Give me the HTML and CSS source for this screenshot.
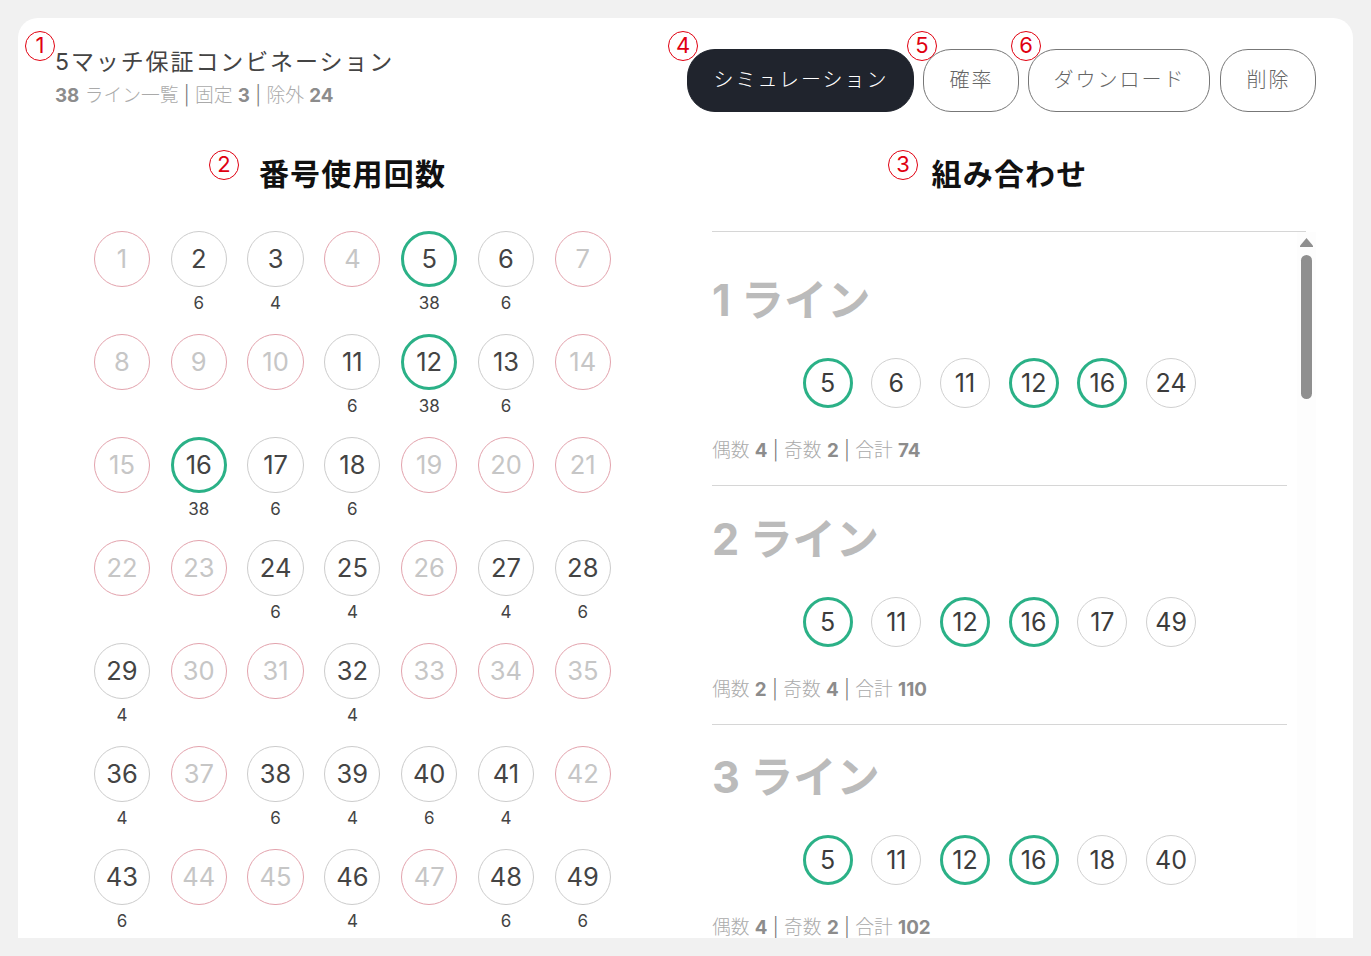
FILE: index.html
```html
<!DOCTYPE html>
<html lang="ja">
<head>
<meta charset="utf-8">
<title>5マッチ保証コンビネーション</title>
<link rel="stylesheet" href="styles.css">
</head>
<body>
<main class="card">
  <header class="top">
    <div class="heading">
      <h1 class="title">5マッチ保証コンビネーション</h1>
      <p class="sub"><b>38</b> ライン一覧 <i>|</i> 固定 <b>3</b> <i>|</i> 除外 <b>24</b></p>
    </div>
    <div class="actions">
      <button class="btn btn-dark">シミュレーション</button>
      <button class="btn btn-one">確率</button>
      <button class="btn btn-dl">ダウンロード</button>
      <button class="btn btn-one">削除</button>
    </div>
  </header>
  <div class="columns">
    <section class="left">
      <h2 class="section-title">番号使用回数</h2>
      <div class="grid">
        <div class="cell"><span class="ball off">1</span></div>
        <div class="cell"><span class="ball">2</span><span class="count">6</span></div>
        <div class="cell"><span class="ball">3</span><span class="count">4</span></div>
        <div class="cell"><span class="ball off">4</span></div>
        <div class="cell"><span class="ball fix">5</span><span class="count">38</span></div>
        <div class="cell"><span class="ball">6</span><span class="count">6</span></div>
        <div class="cell"><span class="ball off">7</span></div>
        <div class="cell"><span class="ball off">8</span></div>
        <div class="cell"><span class="ball off">9</span></div>
        <div class="cell"><span class="ball off">10</span></div>
        <div class="cell"><span class="ball">11</span><span class="count">6</span></div>
        <div class="cell"><span class="ball fix">12</span><span class="count">38</span></div>
        <div class="cell"><span class="ball">13</span><span class="count">6</span></div>
        <div class="cell"><span class="ball off">14</span></div>
        <div class="cell"><span class="ball off">15</span></div>
        <div class="cell"><span class="ball fix">16</span><span class="count">38</span></div>
        <div class="cell"><span class="ball">17</span><span class="count">6</span></div>
        <div class="cell"><span class="ball">18</span><span class="count">6</span></div>
        <div class="cell"><span class="ball off">19</span></div>
        <div class="cell"><span class="ball off">20</span></div>
        <div class="cell"><span class="ball off">21</span></div>
        <div class="cell"><span class="ball off">22</span></div>
        <div class="cell"><span class="ball off">23</span></div>
        <div class="cell"><span class="ball">24</span><span class="count">6</span></div>
        <div class="cell"><span class="ball">25</span><span class="count">4</span></div>
        <div class="cell"><span class="ball off">26</span></div>
        <div class="cell"><span class="ball">27</span><span class="count">4</span></div>
        <div class="cell"><span class="ball">28</span><span class="count">6</span></div>
        <div class="cell"><span class="ball">29</span><span class="count">4</span></div>
        <div class="cell"><span class="ball off">30</span></div>
        <div class="cell"><span class="ball off">31</span></div>
        <div class="cell"><span class="ball">32</span><span class="count">4</span></div>
        <div class="cell"><span class="ball off">33</span></div>
        <div class="cell"><span class="ball off">34</span></div>
        <div class="cell"><span class="ball off">35</span></div>
        <div class="cell"><span class="ball">36</span><span class="count">4</span></div>
        <div class="cell"><span class="ball off">37</span></div>
        <div class="cell"><span class="ball">38</span><span class="count">6</span></div>
        <div class="cell"><span class="ball">39</span><span class="count">4</span></div>
        <div class="cell"><span class="ball">40</span><span class="count">6</span></div>
        <div class="cell"><span class="ball">41</span><span class="count">4</span></div>
        <div class="cell"><span class="ball off">42</span></div>
        <div class="cell"><span class="ball">43</span><span class="count">6</span></div>
        <div class="cell"><span class="ball off">44</span></div>
        <div class="cell"><span class="ball off">45</span></div>
        <div class="cell"><span class="ball">46</span><span class="count">4</span></div>
        <div class="cell"><span class="ball off">47</span></div>
        <div class="cell"><span class="ball">48</span><span class="count">6</span></div>
        <div class="cell"><span class="ball">49</span><span class="count">6</span></div>
      </div>
    </section>
    <section class="right">
      <h2 class="section-title">組み合わせ</h2>
      <div class="scroller">
        <article class="line line-first">
          <h3 class="line-title">1 ライン</h3>
          <div class="picks">
            <span class="pick fix">5</span><span class="pick">6</span><span class="pick">11</span><span class="pick fix">12</span><span class="pick fix">16</span><span class="pick">24</span>
          </div>
          <p class="stat">偶数 <b>4</b> <i>|</i> 奇数 <b>2</b> <i>|</i> 合計 <b>74</b></p>
        </article>
        <article class="line">
          <h3 class="line-title">2 ライン</h3>
          <div class="picks">
            <span class="pick fix">5</span><span class="pick">11</span><span class="pick fix">12</span><span class="pick fix">16</span><span class="pick">17</span><span class="pick">49</span>
          </div>
          <p class="stat">偶数 <b>2</b> <i>|</i> 奇数 <b>4</b> <i>|</i> 合計 <b>110</b></p>
        </article>
        <article class="line line-third">
          <h3 class="line-title">3 ライン</h3>
          <div class="picks">
            <span class="pick fix">5</span><span class="pick">11</span><span class="pick fix">12</span><span class="pick fix">16</span><span class="pick">18</span><span class="pick">40</span>
          </div>
          <p class="stat">偶数 <b>4</b> <i>|</i> 奇数 <b>2</b> <i>|</i> 合計 <b>102</b></p>
        </article>
        <div class="scrollbar"><span class="arrow"></span><span class="thumb"></span></div>
      </div>
    </section>
  </div>
  <span class="mark mark-1">1</span>
  <span class="mark mark-2">2</span>
  <span class="mark mark-3">3</span>
  <span class="mark mark-4">4</span>
  <span class="mark mark-5">5</span>
  <span class="mark mark-6">6</span>
</main>
</body>
</html>
```

FILE: styles.css
```css
* { box-sizing: border-box; }
html, body { margin: 0; height: 100%; }
body {
  background: #f1f1f1;
  padding: 18px;
  height: 956px;
  overflow: hidden;
  font-family: Inter, "Noto Sans CJK JP", sans-serif;
  color: #333;
}
.card {
  position: relative;
  width: 1335px;
  height: 920px;
  background: #fff;
  border-radius: 20px 20px 0 0;
  overflow: hidden;
  padding: 31px 37px 0;
}
.top {
  display: flex;
  justify-content: space-between;
  height: 62px;
}
.title {
  margin: -1px 0 0;
  font-size: 23px;
  line-height: 28px;
  font-weight: 400;
  letter-spacing: 1.9px;
  color: #444;
}
.sub {
  margin: 6px 0 0;
  font-size: 18.8px;
  line-height: 28px;
  color: #aaa;
  font-weight: 300;
  white-space: nowrap;
}
b { font-weight: 700; color: #8c8c8c; }
i { font-style: normal; color: #777; font-weight: 300; }
.actions { display: flex; gap: 9px; height: 63px; }
.btn {
  height: 63px;
  border-radius: 28px;
  border: 1px solid #777;
  background: #fff;
  color: #666;
  font-family: inherit;
  font-size: 20px;
  font-weight: 300;
  letter-spacing: 2px;
  padding: 0 0 5px 1px;
}
.btn-dark { width: 227px; background: #20242d; border-color: #20242d; color: #fff; }
.btn-one { width: 96px; }
.btn-dl { width: 182px; margin-right: 1px; }
.columns {
  display: flex;
  margin-top: 41px;
}
.left { width: 595px; }
.right { width: 604px; margin-left: 62px; }
.section-title {
  margin: 0;
  font-size: 30px;
  line-height: 44px;
  letter-spacing: 1.2px;
  font-weight: 700;
  text-align: center;
  color: #111;
}
.left .section-title { width: 595px; }
.right .section-title { width: 595px; }
.grid {
  display: grid;
  grid-template-columns: repeat(7, 76.8px);
  grid-auto-rows: 103px;
  margin: 35px 0 0 28.6px;
}
.cell {
  display: flex;
  flex-direction: column;
  align-items: center;
}
.ball {
  width: 56.2px;
  height: 56.2px;
  flex: none;
  border-radius: 50%;
  border: 1px solid #ccc;
  display: flex;
  align-items: center;
  justify-content: center;
  font-size: 25.5px;
  font-weight: 400;
  color: #444;
  padding-bottom: 1px;
}
.ball.off { border-color: #e3a3ad; color: #c6c6c6; }
.ball.fix { border: 3px solid #2bb187; }
.count {
  margin-top: 4.8px;
  font-size: 17px;
  line-height: 22px;
  color: #444;
}
.scroller {
  position: relative;
  margin-top: 35px;
  border-top: 1px solid #d6d6d6;
  width: 594px;
  height: 800px;
  overflow: visible;
}
.line {
  width: 574.7px;
  height: 239px;
  border-bottom: 1px solid #d6d6d6;
  padding-top: 24px;
}
.line-first { height: 254px; padding-top: 39px; }
.line-third { padding-top: 23px; border-bottom: 0; }
.line-title {
  margin: 0;
  font-size: 43.2px;
  line-height: 58px;
  font-weight: 700;
  color: #bbb;
}
.picks {
  display: flex;
  justify-content: center;
  gap: 18.7px;
  margin-top: 29px;
}
.pick {
  width: 50px;
  height: 50px;
  border-radius: 50%;
  border: 1px solid #d0d0d0;
  display: flex;
  align-items: center;
  justify-content: center;
  font-size: 25px;
  color: #3c3c3c;
}
.pick.fix { border: 3px solid #2bb187; }
.stat {
  margin: 29px 0 0;
  font-size: 18.8px;
  line-height: 28px;
  color: #aaa;
  font-weight: 300;
}
.scrollbar {
  position: absolute;
  top: 0;
  left: 585px;
  width: 19px;
  height: 800px;
  background: #fdfdfd;
}
.arrow {
  position: absolute;
  left: 3px;
  top: 6px;
  width: 13px;
  height: 9px;
  background: #8f8f8f;
  clip-path: polygon(50% 0, 100% 85%, 100% 100%, 0 100%, 0 85%);
}
.thumb {
  position: absolute;
  left: 4px;
  top: 23px;
  width: 11px;
  height: 144px;
  border-radius: 6px;
  background: #8f8f8f;
}
.mark {
  position: absolute;
  width: 30px;
  height: 30px;
  border: 1px solid #e00010;
  border-radius: 50%;
  background: #fff;
  color: #e00010;
  font-size: 22px;
  line-height: 27px;
  text-align: center;
}
.mark-1 { left: 7px; top: 13px; background: transparent; }
.mark-2 { left: 191px; top: 132px; }
.mark-3 { left: 870px; top: 132px; }
.mark-4 { left: 650px; top: 13px; }
.mark-5 { left: 889px; top: 13px; }
.mark-6 { left: 993px; top: 13px; }
```
